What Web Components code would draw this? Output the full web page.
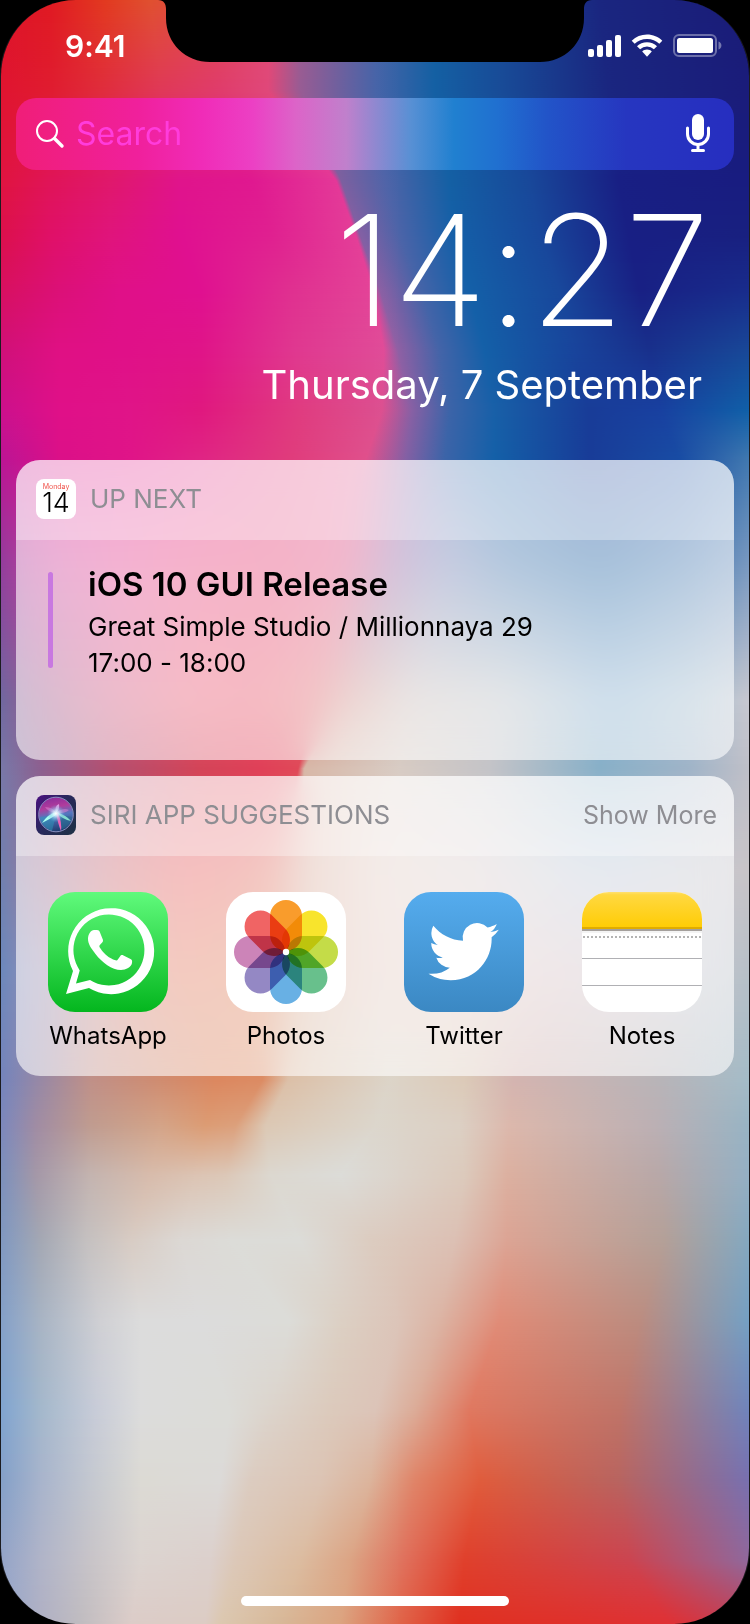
<!DOCTYPE html>
<html lang="en">
<head>
<meta charset="utf-8">
<meta name="viewport" content="width=device-width, initial-scale=1">
<title>Lock screen widgets</title>
<style>
  html, body { height: 100%; }
  body { margin: 0; background: #000; font-family: Inter, "Liberation Sans", sans-serif; font-feature-settings: "calt" 0; }
</style>
</head>
<body>
<phone-screen>
  <status-bar slot="status" time="9:41"></status-bar>
  <search-field></search-field>
  <lock-clock time="14:27" date="Thursday, 7 September"></lock-clock>
  <widget-card heading="UP NEXT">
    <calendar-icon slot="icon"></calendar-icon>
    <event-item heading="iOS 10 GUI Release" place="Great Simple Studio / Millionnaya 29" time="17:00 - 18:00"></event-item>
  </widget-card>
  <widget-card heading="SIRI APP SUGGESTIONS" action="Show More">
    <siri-icon slot="icon"></siri-icon>
    <app-row>
      <app-shortcut name="WhatsApp"></app-shortcut>
      <app-shortcut name="Photos"></app-shortcut>
      <app-shortcut name="Twitter"></app-shortcut>
      <app-shortcut name="Notes"></app-shortcut>
    </app-row>
  </widget-card>
</phone-screen>

<script>
class BaseElement extends HTMLElement {
  render(html) {
    const root = this.shadowRoot || this.attachShadow({ mode: "open" });
    const t = document.createElement("template");
    t.innerHTML = html;
    root.replaceChildren(t.content.cloneNode(true));
    return root;
  }
}

/* Wallpaper: key rows of colour stops; both positions and colours are blended between rows. */
const ROWS = [
  [0,    "0 dc1428|50 e01a22|105 e23a20|150 e05030|200 e04848|270 e04c74|300 9c5c90|375 4864a8|435 1460a0|500 184c98|600 1a2680|750 1a1c78"],
  [90,   "0 e01430|50 e01c30|100 e02c3c|160 e03858|220 e03c6c|268 e0487a|300 985c94|375 4864a8|435 1460a4|500 184c98|610 1a2680|750 1a1c7a"],
  [180,  "0 e01440|50 e01458|110 e0186c|180 e0148c|250 e01890|336 e43898|341 7c60a0|385 5064a8|450 1460a4|530 18489a|620 181f84|750 181c80"],
  [235,  "0 dc104c|50 e01068|110 e0147c|180 e01090|270 e02090|356 e43e98|360 8460a4|400 4c64a8|455 1460a8|540 18489c|630 181f84|750 182080"],
  [290,  "0 d81060|60 dc1078|120 e01088|200 e01090|290 e03090|373 e44498|380 8c60a4|422 4464a8|470 1460a8|560 18489c|640 182084|750 182c8c"],
  [350,  "0 d01078|60 e01084|120 e01088|200 e01488|295 e03890|384 e04c98|398 9060a4|440 4464a8|485 1460a8|575 18449c|650 18308c|750 184898"],
  [410,  "0 cc108c|60 e01088|130 e01488|200 e0187f|300 e03c80|382 dc5090|412 8860a4|450 3c64a8|495 1860a8|590 183c98|660 1840a0|750 1060a8"],
  [458,  "0 bc1494|60 dc1088|130 e01488|200 e02484|290 e03c7c|366 e0508c|406 8460a4|445 3c64a8|495 1460a8|590 183c98|680 184ca4|750 4078b0"],
  [560,  "0 943c9c|50 d0409c|120 e44090|200 e8407c|270 e44074|345 e04c80|400 9068a8|450 7080b4|510 4074ac|600 1e61a2|690 4478b0|750 7898c0"],
  [700,  "0 7068a0|50 a85888|110 d05880|190 ea5870|255 e85468|315 e06c70|345 d4948c|410 ccc0bc|500 c0c4c8|610 88b0d0|700 a8c0d0|750 c8c8d0"],
  [768,  "0 7878a8|40 8c6090|110 b45070|200 d44458|260 e04058|298 e04858|304 d8b8a8|400 d8ccc4|490 c4c4c8|600 88b0c8|690 a0b4c8|750 c0c0c8"],
  [870,  "0 7080b0|40 a07898|110 cc6c74|180 e86060|240 e46860|280 e08070|300 dcb0a0|380 e4d0c8|480 dcd0d0|600 c0ccdc|690 c8c8d0|750 c8c4c8"],
  [970,  "0 6c88bc|40 9890b4|110 d08480|180 e47c60|230 e08060|272 e08860|295 dcb4a0|380 e4ccc4|470 e4ccc8|560 d8c4c8|680 c8c8d0|750 b8c0c8"],
  [1080, "0 7484bc|35 9488a8|90 c09088|160 d08c70|215 dc8860|262 dc8c64|288 dcc0a8|390 dcd4c8|465 dccab8|515 d4b4b0|660 b8b4b8|750 a4bcc8"],
  [1125, "0 7c88bc|35 a08ca4|90 c09c90|160 d4a488|205 dc9c74|235 dca07c|265 dcc8b4|375 dcd6cc|460 dcd0c4|510 dcb8ac|655 bcb0b4|750 98b4c4"],
  [1175, "0 7c90bc|35 a498a8|90 c4b4b0|150 d8bcac|195 dcc4b4|225 dcc8b8|270 dcd8d0|340 dcdcd8|465 dccabc|508 dcb0a0|660 b8a8a8|750 94b0c4"],
  [1240, "0 8098c0|40 a4a8b4|85 c4c0c0|130 d8ccc4|180 dcd8d4|230 dcdcd8|300 dcdcd8|370 dcccc0|455 dcc0b4|508 dca494|665 b4a098|750 84a8c0"],
  [1320, "0 84a0c8|40 a8b4c4|100 d0d0d4|140 dcdcdc|200 dcdcdc|290 dcdcd8|340 dcd0c4|400 dcc4b8|440 dcb4a4|500 e08c78|640 bc8c80|750 74a0c4"],
  [1410, "0 80a4d0|40 a4b8cc|95 c8ccd8|140 dcdcdc|230 dcdcd8|270 dcd4cc|330 dccabc|375 dcc4b8|415 dcac98|470 e07860|620 c07468|750 7084bc"],
  [1480, "0 84a0c8|40 a8b4cc|90 c4c8d0|140 dcdad4|220 dcdad8|250 dcccc0|320 dcc4b4|370 dcb49c|415 e08468|480 e05c3c|620 b86460|750 7870b0"],
  [1560, "0 94a4c8|40 b0b4c8|90 c8c4c8|140 dcd4d0|210 dcd0cc|235 dcc8b8|300 dcbca0|350 dca484|405 e0705c|465 e0402c|630 cc4450|750 90689c"],
  [1624, "0 98a8cc|40 b0b0c4|80 c0bcc0|130 dcccc8|205 dcccc4|220 dcc8b0|280 d8b898|340 dca480|400 e06448|460 e03020|670 e03034|750 c04058"]
].map(([y, s]) => [y, s.split("|").map(p => {
  const [x, c] = p.split(" ");
  return [+x, parseInt(c.slice(0, 2), 16), parseInt(c.slice(2, 4), 16), parseInt(c.slice(4), 16)];
})]);

customElements.define("wall-paper", class extends BaseElement {
  connectedCallback() {
    const root = this.render(`<style>
      :host { display: block; } canvas { display: block; width: 100%; height: 100%; }
    </style><canvas width="750" height="1624" aria-hidden="true"></canvas>`);
    const ctx = root.querySelector("canvas").getContext("2d");
    let k = 0;
    for (let y = 0; y < 1624; y++) {
      while (k < ROWS.length - 2 && y >= ROWS[k + 1][0]) k++;
      const [y0, a] = ROWS[k], [y1, b] = ROWS[k + 1];
      const t = (y - y0) / (y1 - y0);
      const g = ctx.createLinearGradient(0, 0, 750, 0);
      a.forEach((p, i) => {
        const v = p.map((n, j) => n + (b[i][j] - n) * t);
        g.addColorStop(v[0] / 750, `rgb(${v[1]},${v[2]},${v[3]})`);
      });
      ctx.fillStyle = g;
      ctx.fillRect(0, y, 750, 1);
    }
  }
});

customElements.define("phone-screen", class extends BaseElement {
  connectedCallback() {
    this.render(`<style>
      :host { display: block; min-height: 100%; background: #000; }
      .screen { position: relative; display: flex; flex-direction: column; min-height: 100vh; box-sizing: border-box;
        border: solid #1c1c20; border-width: 0 1px; border-radius: 76px; overflow: hidden; }
      wall-paper { position: absolute; inset: 0; }
      .notch { position: absolute; top: 0; left: 50%; margin-left: -217px; display: block; }
      main { position: relative; flex: 1; display: flex; flex-direction: column; gap: 16px; padding: 8px 15px 0; }
      .home { position: relative; align-self: center; width: 268px; height: 10px; margin: 16px 0 18px; border-radius: 5px; background: #fff; }
    </style>
    <div class="screen">
      <wall-paper></wall-paper>
      <svg class="notch" width="434" height="62" viewBox="0 0 434 62" aria-hidden="true">
        <path d="M0 0C6 0 8 4 8 9V18C8 44 28 62 52 62H382C406 62 426 44 426 18V9C426 4 428 0 434 0Z"/>
      </svg>
      <slot name="status"></slot>
      <main><slot></slot></main>
      <div class="home"></div>
    </div>`);
  }
});

customElements.define("status-bar", class extends BaseElement {
  connectedCallback() {
    this.render(`<style>
      :host { position: relative; display: flex; justify-content: space-between; height: 90px; padding: 0 26px 0 64px; color: #fff; }
      time { font-size: 30px; font-weight: 600; line-height: 36px; padding-top: 28px; }
      svg { display: block; padding-top: 32px; }
    </style>
    <time>${this.getAttribute("time")}</time>
    <svg width="136" height="28" viewBox="0 0 136 28" fill="#fff" role="img" aria-label="Signal, Wi-Fi and battery full">
      <rect x="1" y="17" width="6" height="8" rx="2"/><rect x="10" y="13" width="6" height="12" rx="2"/>
      <rect x="19" y="8" width="6" height="17" rx="2"/><rect x="28" y="3" width="6" height="22" rx="2"/>
      <path d="M60 2.5c6 0 11.300 2.300 15.300 6.200l-3 3.100A17.500 17.500 0 0 0 60 6.900c-4.800 0-9.100 1.800-12.300 4.900l-3-3.100A22 22 0 0 1 60 2.500Z"/>
      <path d="M60 10.200c3.900 0 7.400 1.500 10 4l-3.100 3.100a9.900 9.900 0 0 0-13.800 0L50 14.200c2.600-2.500 6.100-4 10-4Z"/>
      <path d="M60 17.600c1.900 0 3.500.7 4.800 1.900L60 24.800l-4.800-5.300c1.300-1.200 2.900-1.900 4.800-1.900Z"/>
      <rect x="87" y="3" width="42" height="21" rx="5" fill="none" stroke="#fff" stroke-opacity=".36" stroke-width="2"/>
      <rect x="90" y="6" width="36" height="15" rx="2.500"/>
      <path d="M131.500 9.500c1.700.6 2.900 2 2.900 4s-1.200 3.400-2.900 4Z" opacity=".4"/>
    </svg>`);
  }
});

customElements.define("search-field", class extends BaseElement {
  connectedCallback() {
    this.render(`<style>
      :host { display: flex; align-items: center; height: 72px; box-sizing: border-box; padding: 0 20px; border-radius: 20px;
        background: linear-gradient(90deg,#f01e78,#f0209c 17%,#f02cb8 26%,#ec40c4 33%,#dc64c8 39%,#c080cc 46%,#9088d0 50%,#5890d4 55%,#2080d0 61%,#2070d0 67%,#2254c8 74%,#2636c0 85%,#262ec0); }
      label { display: flex; }
      input { flex: 1; min-width: 0; margin: 0 0 0 10px; padding: 0; border: 0; outline: 0; background: none; color: #fff;
        font: 400 32px/40px Inter, "Liberation Sans", sans-serif; }
      input::placeholder { color: #ff3cdc; opacity: 1; }
      button { display: flex; margin: 0; padding: 0; border: 0; background: none; }
      svg { display: block; }
    </style>
    <label for="q" aria-label="Search"><svg width="30" height="40" viewBox="0 0 30 40" fill="none" stroke="#fff" stroke-linecap="round">
      <circle cx="11" cy="17" r="10" stroke-width="2"/><path d="M18.500 24.500l7.500 7.500" stroke-width="3.400"/></svg></label>
    <input id="q" type="search" placeholder="Search">
    <button type="button" aria-label="Dictate"><svg width="32" height="44" viewBox="0 0 32 44" fill="none" stroke="#fff">
      <rect x="10" y="2" width="12" height="26" rx="6" fill="#fff" stroke="none"/>
      <path d="M5.500 16v6a10.500 10.500 0 0 0 21 0v-6" stroke-width="3" stroke-linecap="round"/>
      <path d="M16 33v5" stroke-width="3"/><path d="M10.500 38.500h11" stroke-width="3" stroke-linecap="round"/></svg></button>`);
  }
});

customElements.define("lock-clock", class extends BaseElement {
  connectedCallback() {
    this.render(`<style>
      :host { display: flex; flex-direction: column; height: 258px; padding: 0 24px 0 0; color: #fff; text-align: right; }
      time { font-size: 154px; font-weight: 200; line-height: 168px; }
      p { margin: 4px 8px 0 0; font-size: 40px; line-height: 54px; }
    </style>
    <time>${this.getAttribute("time")}</time><p>${this.getAttribute("date")}</p>`);
  }
});

customElements.define("widget-card", class extends BaseElement {
  connectedCallback() {
    const action = this.getAttribute("action");
    this.render(`<style>
      :host { display: block; min-height: 300px; border-radius: 24px; overflow: hidden; color: #000;
        background: rgba(255,255,255,.6); -webkit-backdrop-filter: blur(16px); backdrop-filter: blur(16px); }
      header { display: flex; align-items: center; gap: 14px; height: 80px; box-sizing: border-box; padding: 0 17px 2px 20px;
        background: rgba(255,255,255,.32); }
      h2 { flex: 1; margin: 0; font-size: 26px; font-weight: 400; line-height: 32px; color: #8e8e93; }
      button { margin: 0; padding: 0; border: 0; background: none; font: 400 25px/32px Inter, "Liberation Sans", sans-serif; color: #8e8e93; }
    </style>
    <header><slot name="icon"></slot><h2>${this.getAttribute("heading")}</h2>${action ? `<button type="button">${action}</button>` : ""}</header>
    <slot></slot>`);
  }
});

customElements.define("calendar-icon", class extends BaseElement {
  connectedCallback() {
    this.render(`<style>
      :host { display: flex; flex-direction: column; align-items: center; width: 40px; height: 40px; box-sizing: border-box; padding-top: 4px;
        border-radius: 8px; background: #fff; }
      small { font-size: 7px; line-height: 8px; color: #f0524a; }
      b { font-size: 27px; font-weight: 300; line-height: 24px; color: #000; }
    </style><small>Monday</small><b>14</b>`);
  }
});

customElements.define("siri-icon", class extends BaseElement {
  connectedCallback() {
    this.render(`<style>:host, svg { display: block; }</style>
    <svg width="40" height="40" viewBox="0 0 40 40" aria-hidden="true">
      <defs>
        <linearGradient id="bg" x1="0" y1="0" x2="1" y2=".8"><stop stop-color="#4a1080"/><stop offset=".5" stop-color="#28285c"/><stop offset="1" stop-color="#203048"/></linearGradient>
        <linearGradient id="orb" x1=".3" y1="0" x2=".5" y2="1"><stop stop-color="#8c2c9c"/><stop offset=".3" stop-color="#b03c9c"/><stop offset=".55" stop-color="#5478c0"/><stop offset="1" stop-color="#203c70"/></linearGradient>
        <radialGradient id="glow"><stop stop-color="#fff"/><stop offset=".3" stop-color="#d8f4ff" stop-opacity=".8"/><stop offset="1" stop-color="#58a0e0" stop-opacity="0"/></radialGradient>
        <filter id="soft"><feGaussianBlur stdDeviation=".5"/></filter>
      </defs>
      <rect width="40" height="40" rx="8" fill="url(#bg)"/>
      <circle cx="20" cy="19.500" r="17" fill="url(#orb)"/>
      <path d="M4 22A16.500 16.500 0 0 0 16 36L20 20Z" fill="#2c98b8" opacity=".5"/>
      <path d="M24 35A16.500 16.500 0 0 0 36 22L20 19Z" fill="#286c90" opacity=".6"/>
      <circle cx="20" cy="19.500" r="17.300" fill="none" stroke="#a0a8d8" stroke-width="1" opacity=".8"/>
      <g filter="url(#soft)">
        <path d="M20 17Q12 19 6 28Q14 24 20 20Z" fill="#a8fff0"/>
        <path d="M20 17Q27 25 35 26Q30 20 20 17Z" fill="#90f0d8" opacity=".85"/>
        <path d="M20 18Q22 29 25 36Q26 27 22 18Z" fill="#f060b8"/>
        <path d="M20 18Q18 11 23 9Q24 14 20 18Z" fill="#f0b0f0" opacity=".8"/>
        <path d="M20 18Q12 17 9 12Q17 12 20 18ZM20 18Q27 12 33 15Q28 19 20 18Z" fill="#e088d8" opacity=".5"/>
      </g>
      <circle cx="20" cy="18.500" r="9" fill="url(#glow)"/>
    </svg>`);
  }
});

customElements.define("event-item", class extends BaseElement {
  connectedCallback() {
    this.render(`<style>
      :host { display: flex; gap: 35px; padding: 24px 32px; }
      i { width: 5px; height: 96px; margin-top: 8px; border-radius: 3px; background: #c878e0; }
      h3, p { margin: 0; }
      h3 { font-size: 33px; font-weight: 600; line-height: 40px; margin-bottom: 5px; }
      p { font-size: 26px; line-height: 36px; }
    </style>
    <i></i><div><h3>${this.getAttribute("heading")}</h3><p>${this.getAttribute("place")}</p><p>${this.getAttribute("time")}</p></div>`);
  }
});

customElements.define("app-row", class extends BaseElement {
  connectedCallback() {
    this.render(`<style>:host { display: flex; justify-content: space-between; padding: 36px 32px 24px; }</style><slot></slot>`);
  }
});

const PETALS = ["#f99c2c", "#f8e42c", "#c4dc48", "#68c08c", "#68b0e4", "#9488c4", "#cc84b8", "#f06464"];
const ART = {
  WhatsApp: `<defs><linearGradient id="g" x2="0" y2="1"><stop stop-color="#60fa7c"/><stop offset="1" stop-color="#04b61e"/></linearGradient></defs>
    <rect width="120" height="120" fill="url(#g)"/>
    <path fill="#fff" fill-rule="evenodd" d="M18 102L25 79A43 43 0 1 1 41 96ZM31.700 78.500L28 91.500L42 88A35.500 35.500 0 1 0 29.500 74.500Z"/>
    <path fill="#fff" d="M40 47C40 42 43 38 46 38H49C50.500 38 51.300 38.700 52 40.500L55 48C55.500 50 53 51.500 51.500 53.500C51 54.300 51.800 55.500 52.500 56.500C56.500 62.500 61 66 67.500 68.300C69.500 69 70 67.300 72 64.500C73 63 74 62.800 75.500 63.500L83 67.200C84.300 68 84.200 69 84 71C83.400 75 78 78 73 78C64 78 54 70.500 47.500 62C43 56 40 52 40 47Z"/>`,
  Photos: `<rect width="120" height="120" fill="#fff"/><g>${PETALS.map((c, i) =>
      `<rect x="44" y="8" width="32" height="51" rx="16" fill="${c}" style="mix-blend-mode:multiply" transform="rotate(${i * 45} 60 60)"/>`).join("")}</g>
    <circle cx="60" cy="60" r="3.200" fill="#fff"/>`,
  Twitter: `<defs><linearGradient id="g" x2="0" y2="1"><stop stop-color="#55acee"/><stop offset="1" stop-color="#3b88c3"/></linearGradient></defs>
    <rect width="120" height="120" fill="url(#g)"/>
    <path fill="#fff" transform="translate(24.500 24.400) scale(2.930)" d="M23.953 4.570a10 10 0 01-2.825.775 4.958 4.958 0 002.163-2.723c-.951.555-2.005.959-3.127 1.184a4.920 4.920 0 00-8.384 4.482C7.690 8.095 4.067 6.130 1.640 3.162a4.822 4.822 0 00-.666 2.475c0 1.710.870 3.213 2.188 4.096a4.904 4.904 0 01-2.228-.616v.060a4.923 4.923 0 003.946 4.827 4.996 4.996 0 01-2.212.085 4.936 4.936 0 004.604 3.417 9.867 9.867 0 01-6.102 2.105c-.390 0-.779-.023-1.170-.067a13.995 13.995 0 007.557 2.209c9.053 0 13.998-7.496 13.998-13.985 0-.210 0-.420-.015-.630A9.935 9.935 0 0024 4.590z"/>`,
  Notes: `<defs><linearGradient id="g" x2="0" y2="1"><stop stop-color="#ffe070"/><stop offset=".08" stop-color="#ffd840"/><stop offset="1" stop-color="#ffcc04"/></linearGradient></defs>
    <rect width="120" height="120" fill="#fff"/><rect width="120" height="36" fill="url(#g)"/>
    <rect y="35" width="120" height="2" fill="#e0ac00"/><rect y="37" width="120" height="2" fill="#a4a09c"/><rect y="39" width="120" height="2" fill="#f4f4f4"/>
    <path d="M1 45H120" stroke="#b4b4b4" stroke-width="2" stroke-dasharray="2 2"/>
    <path d="M0 66.500H120M0 93.500H120" stroke="#b0b0b4"/>`
};
customElements.define("app-shortcut", class extends BaseElement {
  connectedCallback() {
    const name = this.getAttribute("name");
    this.render(`<style>
      :host { display: block; width: 120px; }
      a { display: flex; flex-direction: column; align-items: center; gap: 8px; color: #000; text-decoration: none; }
      svg { display: block; border-radius: 27px; isolation: isolate; }
      span { font-size: 24px; line-height: 32px; }
    </style>
    <a href="#${name.toLowerCase()}"><svg width="120" height="120" viewBox="0 0 120 120" aria-hidden="true">${ART[name]}</svg><span>${name}</span></a>`);
  }
});
</script>
</body>
</html>
